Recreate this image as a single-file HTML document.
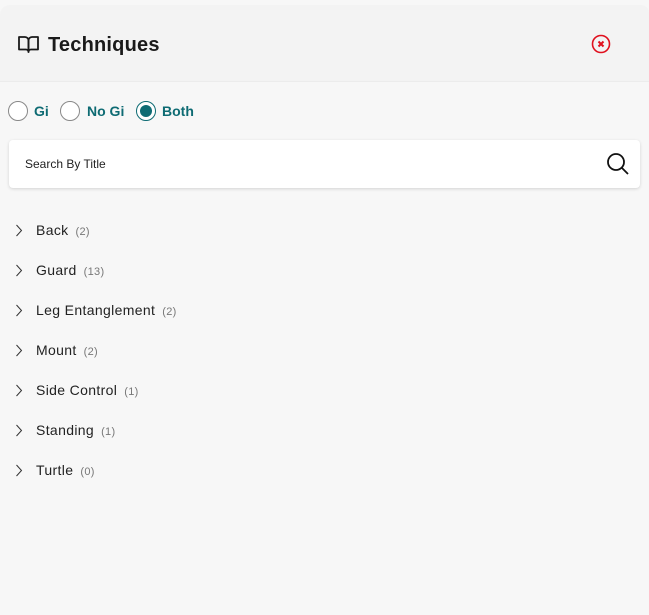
<!DOCTYPE html>
<html><head><meta charset="utf-8"><style>
*{box-sizing:border-box;margin:0;padding:0}
body{width:649px;height:615px;background:#f7f7f7;font-family:"Liberation Sans",sans-serif;position:relative;overflow:hidden}
.hdr{position:absolute;left:0;top:5px;width:649px;height:77px;background:#f3f3f3;border-top-left-radius:10px;border-top-right-radius:8px;border-bottom:1px solid #ececec}
.title{position:absolute;left:48px;top:34px;font-size:20px;font-weight:bold;color:#1a1a1a;letter-spacing:0.2px}
.radio{position:absolute;top:101px;width:20px;height:20px;border-radius:50%;border:1.5px solid #888;background:#fff}
.rl{position:absolute;top:103px;font-size:14px;font-weight:bold;color:#0e6b73}
.search{position:absolute;left:9px;top:140px;width:631px;height:48px;background:#fff;border-radius:4px;box-shadow:0 1px 3px rgba(0,0,0,.15)}
.search span{position:absolute;left:16px;top:17px;font-size:12px;color:#222}
.item{position:absolute;left:0;height:20px;font-size:14px;color:#222}
.item .n{position:absolute;left:36px;top:0;white-space:nowrap;letter-spacing:0.35px}
.item .n small{font-size:11px;color:#777;margin-left:7px;letter-spacing:0.3px}
.item svg{position:absolute;left:15px;top:2px}
</style></head><body>
<div class="hdr"></div>
<svg style="position:absolute;left:18px;top:35px" width="21" height="18" viewBox="0 0 21 18" fill="none" stroke="#1a1a1a" stroke-width="1.8" stroke-linejoin="round"><path d="M1 2h6a3.5 3.5 0 0 1 3.5 3.5V17a2.5 2.5 0 0 0-2.5-2.5H1z"/><path d="M20 2h-6a3.5 3.5 0 0 0-3.5 3.5V17a2.5 2.5 0 0 1 2.5-2.5H20z"/></svg>
<div class="title">Techniques</div>
<svg style="position:absolute;left:591px;top:34px" width="20" height="20" viewBox="0 0 20 20" fill="none" stroke="#e0101e" stroke-width="1.6"><circle cx="10" cy="10" r="8.5"/><path d="M7.5 7.5l5 5M12.5 7.5l-5 5" stroke-width="2"/></svg>
<div class="radio" style="left:8px"></div><div class="rl" style="left:34px">Gi</div>
<div class="radio" style="left:60px"></div><div class="rl" style="left:87px">No Gi</div>
<div class="radio" style="left:136px;border-color:#0e6b73"><div style="position:absolute;left:2.5px;top:2.5px;width:12px;height:12px;border-radius:50%;background:#0e6b73"></div></div><div class="rl" style="left:162px">Both</div>
<div class="search"><span>Search By Title</span>
<svg style="position:absolute;left:597px;top:12px" width="24" height="24" viewBox="0 0 24 24" fill="none" stroke="#111" stroke-width="1.8"><circle cx="10" cy="10" r="8"/><path d="M16 16l6 6"/></svg></div>
<div class="item" style="top:222px"><svg width="8" height="13" viewBox="0 0 8 13" fill="none" stroke="#333" stroke-width="1"><path d="M1.5 1l5 5.5-5 5.5"/></svg><div class="n">Back<small>(2)</small></div></div>
<div class="item" style="top:262px"><svg width="8" height="13" viewBox="0 0 8 13" fill="none" stroke="#333" stroke-width="1"><path d="M1.5 1l5 5.5-5 5.5"/></svg><div class="n">Guard<small>(13)</small></div></div>
<div class="item" style="top:302px"><svg width="8" height="13" viewBox="0 0 8 13" fill="none" stroke="#333" stroke-width="1"><path d="M1.5 1l5 5.5-5 5.5"/></svg><div class="n">Leg Entanglement<small>(2)</small></div></div>
<div class="item" style="top:342px"><svg width="8" height="13" viewBox="0 0 8 13" fill="none" stroke="#333" stroke-width="1"><path d="M1.5 1l5 5.5-5 5.5"/></svg><div class="n">Mount<small>(2)</small></div></div>
<div class="item" style="top:382px"><svg width="8" height="13" viewBox="0 0 8 13" fill="none" stroke="#333" stroke-width="1"><path d="M1.5 1l5 5.5-5 5.5"/></svg><div class="n">Side Control<small>(1)</small></div></div>
<div class="item" style="top:422px"><svg width="8" height="13" viewBox="0 0 8 13" fill="none" stroke="#333" stroke-width="1"><path d="M1.5 1l5 5.5-5 5.5"/></svg><div class="n">Standing<small>(1)</small></div></div>
<div class="item" style="top:462px"><svg width="8" height="13" viewBox="0 0 8 13" fill="none" stroke="#333" stroke-width="1"><path d="M1.5 1l5 5.5-5 5.5"/></svg><div class="n">Turtle<small>(0)</small></div></div>
</body></html>
